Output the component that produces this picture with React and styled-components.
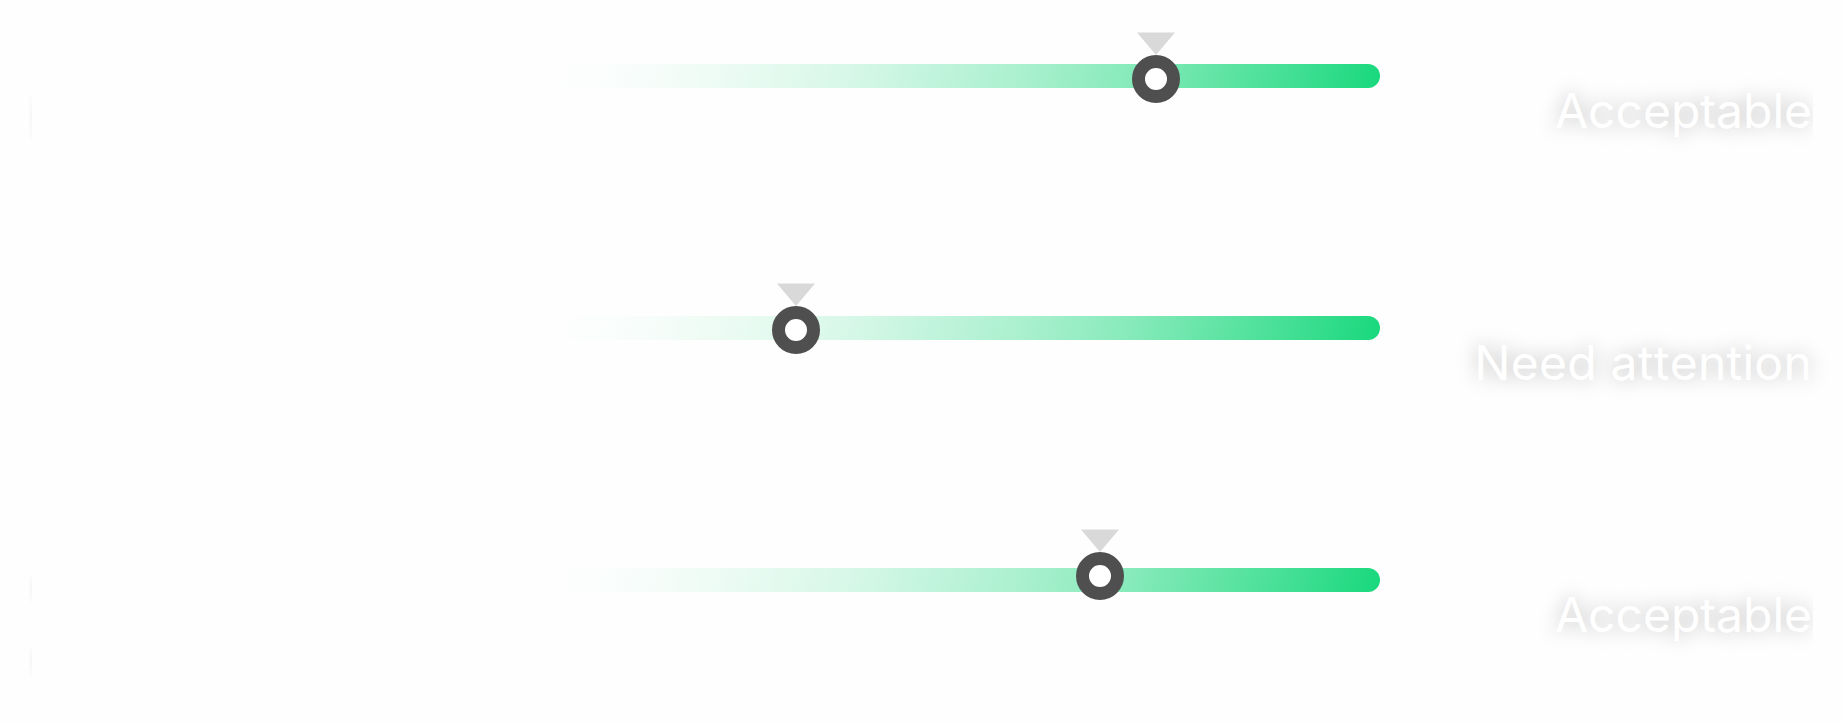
import React from 'react';
import styled, { createGlobalStyle } from 'styled-components';

const GlobalStyle = createGlobalStyle`
  * {
    box-sizing: border-box;
  }

  body {
    margin: 0;
    background: #fefefe;
    font-family: Inter, sans-serif;
  }
`;

const Panel = styled.main`
  display: flex;
  flex-direction: column;
  height: 724px;
  padding-top: 32px;
  overflow: hidden;
`;

const Row = styled.section`
  display: grid;
  grid-template-columns: 523px 828px 1fr;
  flex: 0 0 252px;
  padding: 0 32px 0 29px;

  &:last-child {
    flex-basis: 188px;
  }
`;

const LabelEdge = styled.div`
  display: flex;
  flex-direction: column;
  padding-top: ${({ $top }) => $top}px;
  gap: 44px;
`;

const Edge = styled.div`
  width: 3px;
  height: ${({ $height }) => $height}px;
  background: radial-gradient(ellipse at right, #f5f5f5, #fefefe 100%);
`;

const Track = styled.div`
  position: relative;
  height: 24px;
  margin-top: 32px;
  border-radius: 12px;
  background: linear-gradient(
    105deg,
    rgba(24, 216, 124, 0) 0%,
    rgba(24, 216, 124, 0.03) 12%,
    rgba(24, 216, 124, 0.09) 23%,
    rgba(24, 216, 124, 0.17) 36%,
    rgba(24, 216, 124, 0.37) 57%,
    rgba(24, 216, 124, 0.51) 69%,
    rgba(24, 216, 124, 0.63) 77%,
    rgba(24, 216, 124, 0.8) 88%,
    #18d87c 100%
  );
`;

const Marker = styled.div`
  position: absolute;
  top: ${({ $top }) => $top}px;
  left: ${({ $left }) => $left}px;
  display: flex;
  flex-direction: column;
  align-items: center;
  width: 48px;
`;

const Pointer = styled.div`
  width: 38px;
  height: 23px;
  background: #d9d9d9;
  clip-path: polygon(0 2%, 100% 2%, 50% 100%);
`;

const Knob = styled.div`
  width: 48px;
  height: 48px;
  border: 13px solid #4f4f4f;
  border-radius: 50%;
  background: #fff;
`;

const Status = styled.p`
  margin: 50px 0 0;
  font-size: 48px;
  line-height: 58px;
  color: #fff;
  text-align: right;
  text-shadow: 0 0 20px rgba(0, 0, 0, 0.27);
  white-space: nowrap;
  font-kerning: none;
  letter-spacing: ${({ $spacing }) => $spacing || 0}px;
  clip-path: ${({ $clipped }) => ($clipped ? 'inset(-30px -1px -30px -30px)' : 'none')};
`;

const metrics = [
  { status: 'Acceptable', left: 580, top: -32, labelTop: 63, edges: [45], clipped: true },
  { status: 'Need attention', left: 220, top: -33, labelTop: 0, edges: [], spacing: 0.25 },
  { status: 'Acceptable', left: 524, top: -39, labelTop: 38, edges: [28, 30], clipped: true },
];

function App() {
  return (
    <>
      <GlobalStyle />
      <Panel>
        {metrics.map((metric, index) => (
          <Row key={index}>
            <LabelEdge $top={metric.labelTop}>
              {metric.edges.map((height, i) => (
                <Edge key={i} $height={height} />
              ))}
            </LabelEdge>
            <Track>
              <Marker $left={metric.left} $top={metric.top}>
                <Pointer />
                <Knob />
              </Marker>
            </Track>
            <Status $clipped={metric.clipped} $spacing={metric.spacing}>
              {metric.status}
            </Status>
          </Row>
        ))}
      </Panel>
    </>
  );
}

export default App;
